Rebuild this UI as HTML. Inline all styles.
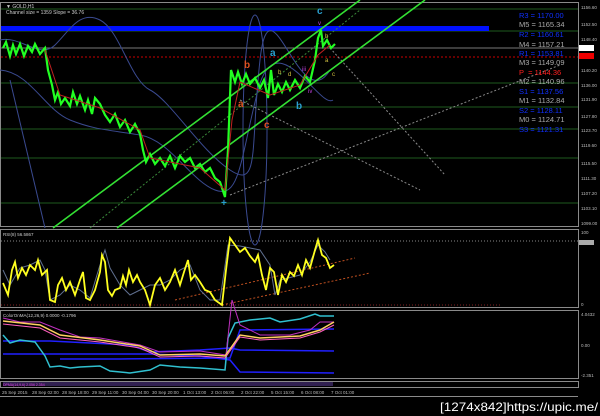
<!DOCTYPE html>
<html><head><meta charset="utf-8"><style>
html,body{margin:0;padding:0;background:#000;width:600px;height:416px;overflow:hidden}
svg{display:block}
text{font-family:"Liberation Sans",sans-serif}
</style></head><body>
<svg width="600" height="416" viewBox="0 0 600 416" xmlns="http://www.w3.org/2000/svg">
<rect width="600" height="416" fill="#000"/>
<g stroke="#8a8a8a" stroke-width="1" fill="none">
<rect x="0.5" y="2.5" width="578" height="224"/>
<rect x="0.5" y="229.5" width="578" height="78"/>
<rect x="0.5" y="310.5" width="578" height="68"/>
<rect x="0.5" y="381.5" width="578" height="6"/>
</g>
<line x1="0" y1="396.5" x2="578" y2="396.5" stroke="#8a8a8a"/>
<g stroke="#1e5a1e" stroke-width="1">
<line x1="1" y1="9" x2="578" y2="9"/><line x1="1" y1="31" x2="578" y2="31"/>
<line x1="1" y1="83" x2="578" y2="83"/><line x1="1" y1="107" x2="578" y2="107"/>
<line x1="1" y1="129" x2="578" y2="129"/><line x1="1" y1="158" x2="578" y2="158"/>
<line x1="1" y1="203" x2="578" y2="203"/>
</g>
<line x1="1" y1="48" x2="578" y2="48" stroke="#777"/>
<line x1="1" y1="57" x2="578" y2="57" stroke="#c00" stroke-dasharray="2,2"/>
<rect x="1" y="26" width="488" height="5" fill="#0010ff"/>
<g fill="none" stroke="#3a4a90" stroke-width="1">
<path d="M0,40 C20,35 40,60 55,45 S80,10 100,20 S130,80 150,90 S200,150 230,170 S250,150 260,60 S300,120 330,70"/>
<path d="M0,70 C30,72 45,110 70,120 S110,130 140,135 S190,180 215,190 S240,160 258,90 S320,110 333,100"/>
<ellipse cx="255" cy="130" rx="12" ry="115"/>
<path d="M10,80 L45,228"/>
</g>
<g fill="none" stroke-dasharray="2,2" stroke-width="1">
<line x1="330" y1="48" x2="445" y2="175" stroke="#8a8a8a"/>
<line x1="240" y1="100" x2="420" y2="190" stroke="#8a8a8a"/>
<line x1="230" y1="195" x2="560" y2="65" stroke="#8a8a8a"/>
<line x1="90" y1="228" x2="360" y2="10" stroke="#3a8a3a"/>
</g>
<g stroke="#33e033" stroke-width="1.6">
<line x1="53" y1="228" x2="360" y2="0"/>
<line x1="117" y1="228" x2="425" y2="0"/>
</g>
<polyline fill="none" stroke="#22ff22" stroke-width="2.2" points="3,48 6,42 10,56 13,45 16,54 20,44 24,56 28,46 32,52 35,44 40,54 45,48 48,70 52,85 55,100 58,92 61,104 65,98 70,106 73,92 77,104 80,96 85,110 88,100 92,114 95,98 100,104 105,115 110,122 115,114 120,127 125,120 130,132 135,124 140,134 143,150 146,162 150,154 155,164 160,158 165,166 170,156 175,168 180,156 185,162 190,158 195,168 200,164 205,172 210,168 215,178 220,182 225,197 228,150 231,70 235,82 238,72 242,84 246,74 250,84 255,78 260,88 264,80 268,98 271,70 274,95 278,84 282,92 286,82 290,90 295,80 300,88 305,76 310,82 315,60 318,38 321,30 323,46 327,40 331,48 335,44"/>
<polyline fill="none" stroke="#c02020" stroke-width="1" points="45,50 60,95 100,108 140,130 150,158 200,168 225,190 232,120 240,82 270,95 300,85 318,55 330,45"/>
<g font-size="10" font-weight="bold">
<text x="317" y="14" fill="#2aa0d0">c</text>
<text x="270" y="56" fill="#2aa0d0">a</text>
<text x="244" y="68" fill="#e05020">b</text>
<text x="238" y="107" fill="#e05020">a</text>
<text x="264" y="128" fill="#e05020">c</text>
<text x="296" y="109" fill="#2aa0d0">b</text>
<text x="221" y="206" fill="#2aa0d0">+</text>
</g>
<g font-size="6" fill="#d0c040"><text x="278" y="74">b</text><text x="288" y="76">d</text><text x="325" y="38">b</text><text x="325" y="62">a</text><text x="332" y="76">c</text></g>
<g font-size="6" fill="#c040e0"><text x="302" y="71">iii</text><text x="308" y="93">iv</text><text x="318" y="25">v</text></g>
<text x="6" y="8" font-size="5" fill="#ccc">▼ GOLD,H1</text>
<text x="6" y="14" font-size="5" fill="#ccc">Channel size = 1359 Slope = 36.76</text>
<g font-size="7.5" font-family="Liberation Sans">
<text x="519" y="18" fill="#1030ff">R3 = 1170.00</text>
<text x="519" y="27" fill="#aaa">M5 = 1165.34</text>
<text x="519" y="37" fill="#1030ff">R2 = 1160.61</text>
<text x="519" y="47" fill="#aaa">M4 = 1157.21</text>
<text x="519" y="56" fill="#1030ff">R1 = 1153.81</text>
<text x="519" y="65" fill="#aaa">M3 = 1149.09</text>
<text x="519" y="75" fill="#ff2020">P&#160;&#160;= 1144.36</text>
<text x="519" y="84" fill="#aaa">M2 = 1140.96</text>
<text x="519" y="94" fill="#1030ff">S1 = 1137.56</text>
<text x="519" y="103" fill="#aaa">M1 = 1132.84</text>
<text x="519" y="113" fill="#1030ff">S2 = 1128.11</text>
<text x="519" y="122" fill="#aaa">M0 = 1124.71</text>
<text x="519" y="132" fill="#1030ff">S3 = 1121.31</text>
</g>
<g font-size="4.5" fill="#bbb">
<text x="581" y="9">1156.60</text><text x="581" y="26">1152.50</text><text x="581" y="41">1148.40</text>
<text x="581" y="72">1140.20</text><text x="581" y="87">1136.00</text><text x="581" y="101">1131.90</text>
<text x="581" y="118">1127.80</text><text x="581" y="132">1123.70</text><text x="581" y="147">1119.60</text>
<text x="581" y="165">1115.50</text><text x="581" y="180">1111.30</text><text x="581" y="195">1107.20</text>
<text x="581" y="210">1103.10</text><text x="581" y="225">1099.00</text>
<text x="581" y="234">100</text><text x="581" y="306">0</text><text x="581" y="316">4.0432</text>
<text x="581" y="347">0.00</text><text x="581" y="377">-2.351</text>
</g>
<rect x="579" y="45" width="15" height="6" fill="#fff"/><rect x="579" y="53" width="15" height="6" fill="#e00"/>
<rect x="579" y="240" width="15" height="5" fill="#aaa"/>
<text x="3" y="236" font-size="4.5" fill="#ccc">RSI(8) 56.5867</text>
<line x1="1" y1="241" x2="578" y2="241" stroke="#888" stroke-dasharray="1,2"/>
<line x1="1" y1="305" x2="500" y2="305" stroke="#802020" stroke-dasharray="1,2"/>
<g stroke="#c05020" stroke-dasharray="2,2"><line x1="175" y1="300" x2="355" y2="258"/><line x1="222" y1="305" x2="370" y2="273"/></g>
<polyline fill="none" stroke="#607090" stroke-width="1" points="3,270 10,285 20,268 30,265 40,260 45,270 50,300 60,295 70,285 80,290 90,298 100,265 105,250 110,268 120,285 130,295 140,290 150,285 160,285 170,280 180,270 190,265 200,290 210,300 220,300 228,245 240,246 260,250 270,265 275,295 280,280 300,275 310,262 318,245 325,252 330,260"/>
<polyline fill="none" stroke="#ffff20" stroke-width="1.8" points="3,283 8,295 12,270 15,262 18,278 22,268 26,275 30,265 35,270 38,260 42,275 47,270 50,300 55,302 58,285 62,278 66,290 70,282 75,295 80,280 83,272 86,298 90,300 95,290 100,272 102,255 105,262 108,290 112,296 115,290 120,288 123,276 126,285 129,270 133,282 137,275 140,282 145,290 150,305 155,285 160,278 165,290 170,282 175,270 180,285 184,272 188,260 191,280 195,275 200,282 205,290 210,292 215,300 222,305 226,270 230,238 235,245 240,252 245,248 250,256 255,262 258,255 262,275 266,290 270,268 274,272 278,295 282,275 286,282 290,272 294,276 298,265 302,275 306,260 310,268 315,250 318,240 322,255 326,258 330,268 334,265"/>
<text x="3" y="317" font-size="4.5" fill="#ccc">ColorOnMA(12,26,9) 0.0000 -0.1796</text>
<g fill="none" stroke-width="1.5">
<polyline stroke="#2020ff" points="3,341 50,341 130,345 150,352 200,350 230,348 240,350 334,351"/>
<polyline stroke="#2020ff" points="3,354 150,354 200,356 230,360 240,372 334,373"/>
<polyline stroke="#2020ff" points="60,359 120,359 230,358 240,330 334,329"/>
<polyline stroke="#30c0d0" points="3,335 10,343 20,340 35,342 45,356 50,367 60,366 70,368 80,367 100,366 110,371 130,373 150,370 160,365 180,367 200,368 225,370 228,338 235,323 250,320 270,318 280,322 300,319 315,314 320,316 334,316"/>
<polyline stroke="#c030c0" stroke-width="1" points="3,318 20,322 40,322 60,330 80,337 100,338 140,345 160,352 200,351 226,355 232,300 240,325 260,335 290,335 310,330 320,322 334,322"/>
<polyline stroke="#ffd060" points="3,321 40,325 60,335 100,340 140,346 160,355 200,354 225,356 240,335 260,338 300,336 320,330 334,322"/>
<polyline stroke="#ff60c0" stroke-width="1" points="3,324 40,328 60,338 100,342 140,348 160,357 200,356 225,358 240,337 260,340 300,338 320,332 334,325"/>
</g>
<rect x="3" y="382" width="330" height="4" fill="#302050"/>
<text x="3" y="386" font-size="3.5" fill="#e040e0">DPMA(14,9,6) 2.056 2.354</text>
<g font-size="4.5" fill="#bbb">
<text x="2" y="394">25 Sep 2015</text><text x="32" y="394">28 Sep 02:00</text><text x="62" y="394">28 Sep 18:00</text>
<text x="92" y="394">29 Sep 11:00</text><text x="122" y="394">30 Sep 04:00</text><text x="152" y="394">30 Sep 20:00</text>
<text x="183" y="394">1 Oct 13:00</text><text x="211" y="394">2 Oct 06:00</text><text x="241" y="394">2 Oct 22:00</text>
<text x="271" y="394">5 Oct 15:00</text><text x="301" y="394">6 Oct 08:00</text><text x="331" y="394">7 Oct 01:00</text>
</g>
<text x="598" y="411" font-size="12" fill="#fff" text-anchor="end" font-family="DejaVu Sans Mono,monospace" textLength="158" lengthAdjust="spacingAndGlyphs">[1274x842]https://upic.me/</text>
</svg>
</body></html>
